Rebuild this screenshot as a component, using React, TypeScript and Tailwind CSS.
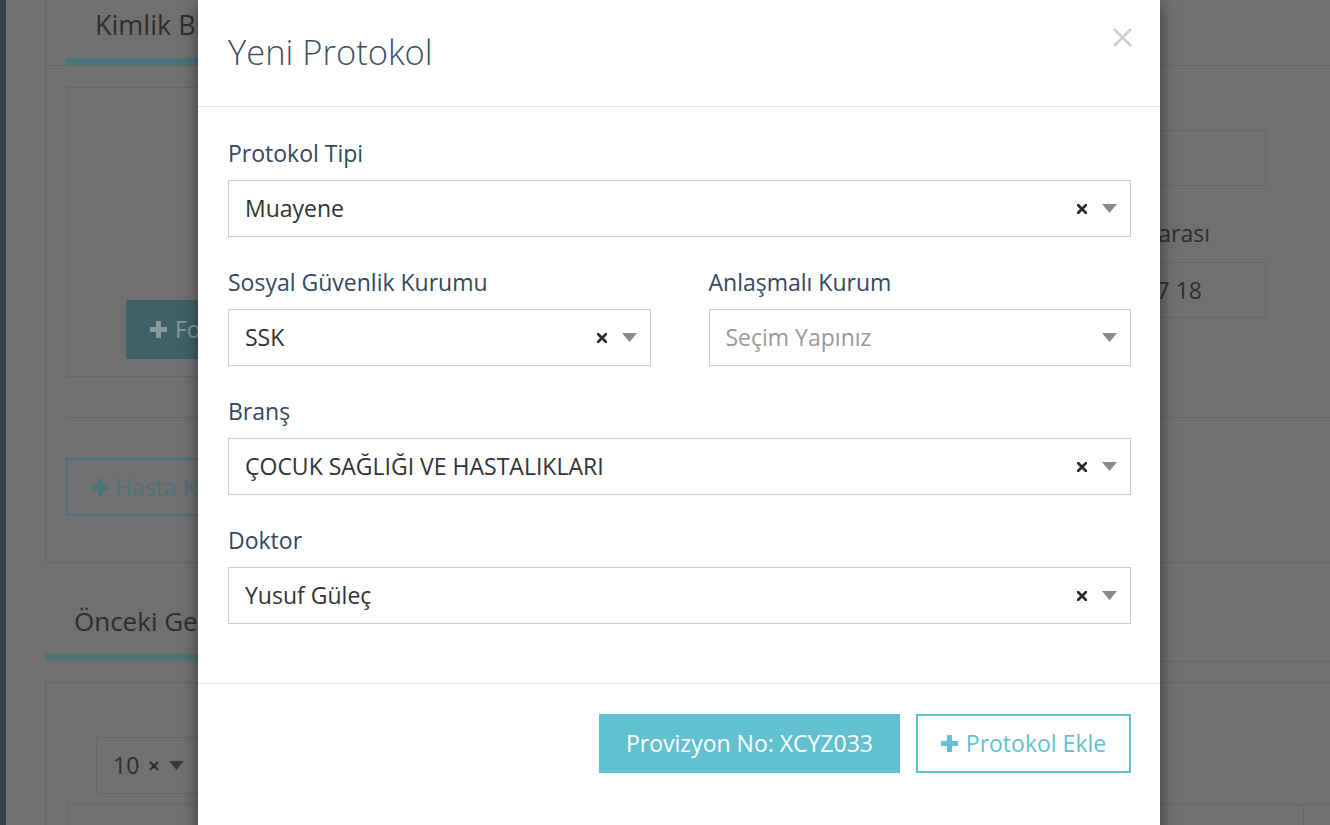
import React from 'react';

const LINE = 'border-[#656565]';

function ClearIcon() {
  return (
    <svg width="10" height="10" viewBox="0 0 10 10" className="shrink-0">
      <path d="M1 1L9 9M9 1L1 9" stroke="#2a2a2a" strokeWidth="2.7" strokeLinecap="square" />
    </svg>
  );
}

function Caret({ color = '#8a8a8a' }: { color?: string }) {
  return (
    <svg width="15" height="9" viewBox="0 0 15 9" className="shrink-0">
      <path d="M0 0H15L7.5 9Z" fill={color} />
    </svg>
  );
}

function PlusIcon({ color, size = 17 }: { color: string; size?: number }) {
  return (
    <svg width={size} height={size} viewBox="0 0 17 17" className="shrink-0">
      <path d="M6 0H11V6H17V11H11V17H6V11H0V6H6Z" fill={color} />
    </svg>
  );
}

interface SelectProps {
  value?: string;
  placeholder?: string;
}

function Select({ value, placeholder }: SelectProps) {
  return (
    <div className="h-[57px] border border-[#c8ccd9] bg-white flex items-center pl-[16px] pr-[13px]">
      <span className={`flex-1 text-[23px] leading-none ${value ? 'text-[#333333]' : 'text-[#9a9a9a]'}`}>
        {value ?? placeholder}
      </span>
      {value && (
        <span className="mr-[15px] flex">
          <ClearIcon />
        </span>
      )}
      <Caret />
    </div>
  );
}

function Field({ label, children }: { label: string; children: React.ReactNode }) {
  return (
    <div>
      <div className="text-[23px] leading-[32px] text-[#34495e] mb-[11px]">{label}</div>
      {children}
    </div>
  );
}

function Background() {
  return (
    <div className="flex h-full">
      <div className="w-[6px] shrink-0 bg-[#3c4245]" />
      <main className="flex-1 min-w-0 pl-[39px]">
        {/* Kimlik panel */}
        <section className={`h-[563px] border-l border-b ${LINE} flex flex-col`}>
          <div className={`h-[66px] flex border-b ${LINE}`}>
            <div className="ml-[20px] w-[320px] flex flex-col justify-end">
              <div className="pl-[29px] text-[27px] leading-none text-[#2e2e2e] mb-[20px]">Kimlik Bilgileri</div>
              <div className="h-[7px] bg-[#4a7377]" />
            </div>
          </div>
          <div className="grid grid-cols-[560px_1fr] gap-[60px] pl-[21px] pr-[64px] pt-[21px]">
            <div className={`h-[290px] border ${LINE} flex items-end pl-[58px] pb-[17px]`}>
              <div className="h-[59px] bg-[#3f6266] flex items-center gap-[8px] px-[24px] text-[23px] text-[#889a9c]">
                <PlusIcon color="#889a9c" />
                Fotoğraf Yükle
              </div>
            </div>
            <div className="pt-[43px]">
              <div className={`h-[56px] border ${LINE}`} />
              <div className="mt-[31px] text-[23px] leading-[32px] text-[#2e2e2e] text-right pr-[56px]">
                Cep Telefonu Numarası
              </div>
              <div className={`mt-[13px] h-[56px] border ${LINE} flex items-center justify-end pr-[63px] text-[23px] text-[#2e2e2e]`}>
                0 532 417 17 18
              </div>
            </div>
          </div>
          <div className={`ml-[21px] mt-[40px] border-t ${LINE}`} />
          <div className="pl-[20px] pt-[40px]">
            <div className="w-[260px] h-[58px] border-2 border-[#4a7377] flex items-center gap-[6px] pl-[24px] text-[23px] text-[#4a7377]">
              <PlusIcon color="#4a7377" />
              Hasta Kaydet
            </div>
          </div>
        </section>

        {/* Önceki Gelişler panel */}
        <div className={`h-[99px] flex border-b ${LINE}`}>
          <div className="w-[340px] flex flex-col justify-end">
            <div className="pl-[29px] text-[26px] leading-none text-[#2e2e2e] mb-[20px]">Önceki Gelişler</div>
            <div className="h-[6px] bg-[#4a7377] mb-[1px]" />
          </div>
        </div>
        <section className={`mt-[20px] border-l border-t ${LINE} h-[200px]`}>
          <div className="pl-[50px] pt-[54px]">
            <div className={`w-[240px] h-[57px] border ${LINE} flex items-center pl-[16px] gap-[10px] text-[23px] text-[#2e2e2e]`}>
              10
              <svg width="10" height="10" viewBox="0 0 10 10">
                <path d="M1 1L9 9M9 1L1 9" stroke="#2e2e2e" strokeWidth="2.2" />
              </svg>
              <Caret color="#3a3a3a" />
            </div>
          </div>
          <div className={`ml-[21px] mt-[10px] border-t border-l ${LINE} h-[40px] flex justify-end pr-[26px]`}>
            <div className={`border-l ${LINE}`} />
          </div>
        </section>
      </main>
    </div>
  );
}

export default function App() {
  return (
    <div className="relative h-[825px] overflow-hidden bg-[#707070] font-['Open_Sans','Liberation_Sans',sans-serif]">
      <Background />

      {/* Modal */}
      <div className="absolute top-0 left-[198px] w-[962px] h-[860px] bg-white shadow-[0_5px_15px_rgba(0,0,0,0.5)]">
        <div className="h-[107px] border-b border-[#e5e5e5] flex justify-between pl-[30px] pr-[28px]">
          <h2 className="self-center pb-[2px] text-[34.5px] leading-none font-light text-[#3d4f63]">Yeni Protokol</h2>
          <button className="mt-[28px] self-start">
            <svg width="19" height="19" viewBox="0 0 19 19">
              <path d="M1 1L18 18M18 1L1 18" stroke="#cdcdcd" strokeWidth="2.6" />
            </svg>
          </button>
        </div>

        <div className="pl-[30px] pr-[29px] pt-[30px] pb-[59px] flex flex-col gap-[29px]">
          <Field label="Protokol Tipi">
            <Select value="Muayene" />
          </Field>
          <div className="grid grid-cols-2 gap-x-[58px]">
            <Field label="Sosyal Güvenlik Kurumu">
              <Select value="SSK" />
            </Field>
            <Field label="Anlaşmalı Kurum">
              <Select placeholder="Seçim Yapınız" />
            </Field>
          </div>
          <Field label="Branş">
            <Select value="ÇOCUK SAĞLIĞI VE HASTALIKLARI" />
          </Field>
          <Field label="Doktor">
            <Select value="Yusuf Güleç" />
          </Field>
        </div>

        <div className="border-t border-[#e5e5e5] pt-[30px] pr-[29px] flex justify-end gap-[16px]">
          <button className="h-[59px] w-[301px] bg-[#62c1d0] text-white text-[23px] flex items-center justify-center">
            Provizyon No: XCYZ033
          </button>
          <button className="h-[59px] w-[215px] border-2 border-[#62c1d0] text-[#62c1d0] text-[23px] flex items-center justify-center gap-[8px]">
            <PlusIcon color="#62c1d0" />
            Protokol Ekle
          </button>
        </div>
      </div>
    </div>
  );
}
